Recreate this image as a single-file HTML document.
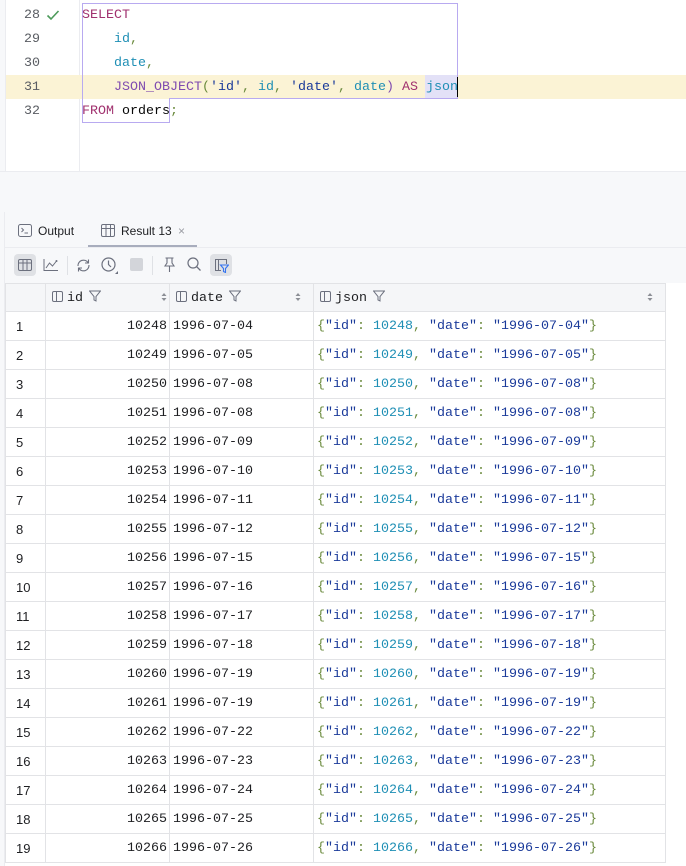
<!DOCTYPE html>
<html><head><meta charset="utf-8"><style>
*{margin:0;padding:0;box-sizing:border-box}
body{width:686px;height:866px;overflow:hidden;background:#fff;font-family:"Liberation Mono",monospace;font-size:13.33px;position:relative}
.abs{position:absolute}
.ln{position:absolute;left:0;width:40px;text-align:right;color:#5a5d63;}
.code{position:absolute;left:82px;white-space:pre;color:#080808}
.kw{color:#a0306e}.fn{color:#7f4bb0}.id{color:#1f8fb5}.str{color:#1a3a9a}.p{color:#6a8a3c}
.sans{font-family:"Liberation Sans",sans-serif;font-size:12px;color:#1e1f22}
table{border-collapse:collapse;position:absolute;left:5px;top:283px;}
td{height:29px;border:1px solid #e2e3e6;padding:0 4px;white-space:nowrap;color:#1e1f22}
tr.h td{height:28px;background:#f5f6f8}
td.n{width:40px;font-family:"Liberation Sans",sans-serif;font-size:13px;padding-left:10px}
td.i{width:124px;text-align:right;padding-right:2px}
td.d{width:144px;padding-left:3px}
td.j{width:352px;padding-left:3px}
.ic{display:inline-block;width:11px;height:11px;border:1px solid #6c707e;border-radius:2px;vertical-align:-1px;margin-right:4px;position:relative}
.ic:after{content:"";position:absolute;left:3px;top:0;bottom:0;border-left:1px solid #6c707e}
.srt{float:right;margin-top:2px}
.fl{margin-left:6px;vertical-align:-1px}
</style></head><body>
<!-- editor -->
<div class="abs" style="left:0;top:0;width:6px;height:171px;background:#f7f8fa;border-right:1px solid #ebecf0"></div>
<div class="abs" style="left:79px;top:0;width:1px;height:171px;background:#ebecf0"></div>
<div class="abs" style="left:6px;top:75px;width:680px;height:24px;background:#fbf3d5"></div>
<div class="abs" style="left:425px;top:75px;width:32px;height:24px;background:#e3e1f7"></div>
<div class="abs" style="left:82px;top:3px;width:376px;height:96px;border:1px solid #b8aaf0;border-bottom:none"></div>
<div class="abs" style="left:82px;top:98px;width:88px;height:25px;border:1px solid #b8aaf0;border-top:none"></div>
<div class="abs" style="left:170px;top:98px;width:288px;height:1px;background:#b8aaf0"></div>
<div class="abs" style="left:457px;top:77px;width:1px;height:20px;background:#000"></div>
<div class="ln" style="top:8px">28</div>
<svg class="abs" style="left:46px;top:9px" width="14" height="12" viewBox="0 0 14 12"><path d="M1.5 6.5 L5 10 L12.5 2" fill="none" stroke="#4c9a5a" stroke-width="1.6"/></svg>
<div class="ln" style="top:32px">29</div>
<div class="ln" style="top:56px">30</div>
<div class="ln" style="top:80px">31</div>
<div class="ln" style="top:104px">32</div>
<div class="code" style="top:8px"><span class="kw">SELECT</span></div>
<div class="code" style="top:32px">    <span class="id">id</span><span class="p">,</span></div>
<div class="code" style="top:56px">    <span class="id">date</span><span class="p">,</span></div>
<div class="code" style="top:80px">    <span class="fn">JSON_OBJECT</span><span class="p">(</span><span class="str">'id'</span><span class="p">,</span> <span class="id">id</span><span class="p">,</span> <span class="str">'date'</span><span class="p">,</span> <span class="id">date</span><span class="fn">)</span> <span class="kw">AS</span> <span class="id">json</span></div>
<div class="code" style="top:104px"><span class="kw">FROM</span> orders<span class="p">;</span></div>
<!-- gray gap -->
<div class="abs" style="left:0;top:171px;width:686px;height:41px;background:#f7f8fa;border-top:1px solid #ebecf0"></div>
<!-- panel -->
<div class="abs" style="left:0;top:212px;width:686px;height:654px;background:#fff;border-top:1px solid #ebecf0"></div>
<div class="abs" style="left:0;top:212px;width:5px;height:654px;background:#f7f8fa;border-right:1px solid #ebecf0"></div>
<div class="abs" style="left:5px;top:212px;width:681px;height:71px;background:#f7f8fa"></div>
<div class="abs" style="left:5px;top:247px;width:681px;height:1px;background:#ebecf0"></div>
<div class="abs" style="left:88px;top:245px;width:109px;height:2px;background:#a8adbd"></div>
<svg class="abs" style="left:18px;top:224px" width="14" height="13" viewBox="0 0 14 13"><rect x="0.5" y="0.5" width="13" height="12" rx="2" fill="none" stroke="#6c707e"/><path d="M3.5 4 L5.5 6 L3.5 8 M6.5 9 H10" fill="none" stroke="#6c707e"/></svg>
<div class="abs sans" style="left:38px;top:224px">Output</div>
<svg class="abs" style="left:101px;top:224px" width="14" height="13" viewBox="0 0 14 13"><rect x="0.5" y="0.5" width="13" height="12" rx="1.5" fill="none" stroke="#6c707e"/><path d="M0.5 4.5 H13.5 M5 0.5 V12.5 M9.5 0.5 V12.5" stroke="#6c707e"/></svg>
<div class="abs sans" style="left:121px;top:224px">Result 13 <span style="color:#9a9ca3;margin-left:3px">×</span></div>
<!-- toolbar -->
<div class="abs" style="left:14px;top:254px;width:22px;height:22px;background:#dfe1e5;border-radius:4px"></div>
<svg class="abs" style="left:18px;top:258px" width="14" height="14" viewBox="0 0 14 14"><rect x="0.5" y="1.5" width="13" height="11" rx="1.5" fill="none" stroke="#6c707e"/><path d="M0.5 5 H13.5 M5 1.5 V12.5 M9 1.5 V12.5" stroke="#6c707e"/></svg>
<svg class="abs" style="left:43px;top:258px" width="16" height="14" viewBox="0 0 16 14"><path d="M1 1 V12.5 H15 M3 10 L6.5 5 L9.5 8 L13.5 3" fill="none" stroke="#6c707e"/><circle cx="13.5" cy="3" r="1" fill="#6c707e"/></svg>
<div class="abs" style="left:67px;top:256px;width:1px;height:19px;background:#dfe1e5"></div>
<svg class="abs" style="left:76px;top:258px" width="15" height="15" viewBox="0 0 15 15"><path d="M2 8 A5.5 5.5 0 0 1 12 4.5 M13 7 A5.5 5.5 0 0 1 3 10.5" fill="none" stroke="#6c707e" stroke-width="1.1"/><path d="M12.5 1.5 V5 H9 M2.5 13.5 V10 H6" fill="none" stroke="#6c707e" stroke-width="1.1"/></svg>
<svg class="abs" style="left:101px;top:257px" width="18" height="18" viewBox="0 0 18 18"><circle cx="7.5" cy="7.5" r="6.5" fill="none" stroke="#6c707e" stroke-width="1.2"/><path d="M7.5 3.5 V7.5 L10 10" fill="none" stroke="#6c707e" stroke-width="1.2"/><path d="M14 17 L17 14 V17 Z" fill="#6c707e"/></svg>
<div class="abs" style="left:130px;top:258px;width:13px;height:13px;background:#d3d5da;border-radius:2px"></div>
<div class="abs" style="left:152px;top:256px;width:1px;height:19px;background:#dfe1e5"></div>
<svg class="abs" style="left:163px;top:257px" width="13" height="16" viewBox="0 0 13 16"><path d="M2.5 1 H10.5 M4 1 V6 L2 9 H11 L9 6 V1 M6.5 9 V15" fill="none" stroke="#6c707e" stroke-width="1.1"/></svg>
<svg class="abs" style="left:187px;top:257px" width="15" height="15" viewBox="0 0 15 15"><circle cx="6" cy="6" r="5" fill="none" stroke="#6c707e" stroke-width="1.2"/><path d="M9.8 9.8 L13.5 13.5" stroke="#6c707e" stroke-width="1.3"/></svg>
<div class="abs" style="left:210px;top:254px;width:22px;height:22px;background:#dfe1e5;border-radius:4px"></div>
<svg class="abs" style="left:214px;top:258px" width="15" height="15" viewBox="0 0 15 15"><path d="M7 12.5 H1.5 V1.5 H12.5 V6 M4.5 1.5 V12.5" fill="none" stroke="#6c707e"/><path d="M6.5 7 H14.5 L11.5 10.5 V14.5 L9.5 13.5 V10.5 Z" fill="none" stroke="#3574f0" stroke-width="1.1"/></svg>
<table>
<tr class="h"><td class="n"></td><td class="i" style="text-align:left;padding-left:6px"><span class="ic"></span>id<svg class="fl" width="12" height="12" viewBox="0 0 12 12"><path d="M0.5 1 H11.5 L7 6.5 V11 L5 10 V6.5 Z" fill="none" stroke="#6c707e"/></svg><svg class="srt" width="6" height="10" viewBox="0 0 6 10"><path d="M0.5 4 L3 1 L5.5 4 Z M0.5 6 L3 9 L5.5 6 Z" fill="#8c8f96"/></svg></td><td class="d" style="padding-left:6px"><span class="ic"></span>date<svg class="fl" width="12" height="12" viewBox="0 0 12 12"><path d="M0.5 1 H11.5 L7 6.5 V11 L5 10 V6.5 Z" fill="none" stroke="#6c707e"/></svg><svg class="srt" width="6" height="10" viewBox="0 0 6 10" style="margin-right:8px"><path d="M0.5 4 L3 1 L5.5 4 Z M0.5 6 L3 9 L5.5 6 Z" fill="#8c8f96"/></svg></td><td class="j" style="padding-left:6px"><span class="ic"></span>json<svg class="fl" width="12" height="12" viewBox="0 0 12 12"><path d="M0.5 1 H11.5 L7 6.5 V11 L5 10 V6.5 Z" fill="none" stroke="#6c707e"/></svg><svg class="srt" width="6" height="10" viewBox="0 0 6 10" style="margin-right:8px"><path d="M0.5 4 L3 1 L5.5 4 Z M0.5 6 L3 9 L5.5 6 Z" fill="#8c8f96"/></svg></td></tr>
</table>
<script>
var d=["04","05","08","08","09","10","11","12","15","16","17","18","19","19","22","23","24","25","26"];
var t=document.querySelector("table"),h="";
for(var k=0;k<19;k++){var id=10248+k,dt="1996-07-"+d[k];
h+='<tr><td class="n">'+(k+1)+'</td><td class="i">'+id+'</td><td class="d">'+dt+'</td><td class="j"><span class="p">{</span><span class="str">"id"</span><span class="p">:</span> <span class="id">'+id+'</span><span class="p">,</span> <span class="str">"date"</span><span class="p">:</span> <span class="str">"'+dt+'"</span><span class="p">}</span></td></tr>';}
t.insertAdjacentHTML("beforeend",h);
</script>
</body></html>
